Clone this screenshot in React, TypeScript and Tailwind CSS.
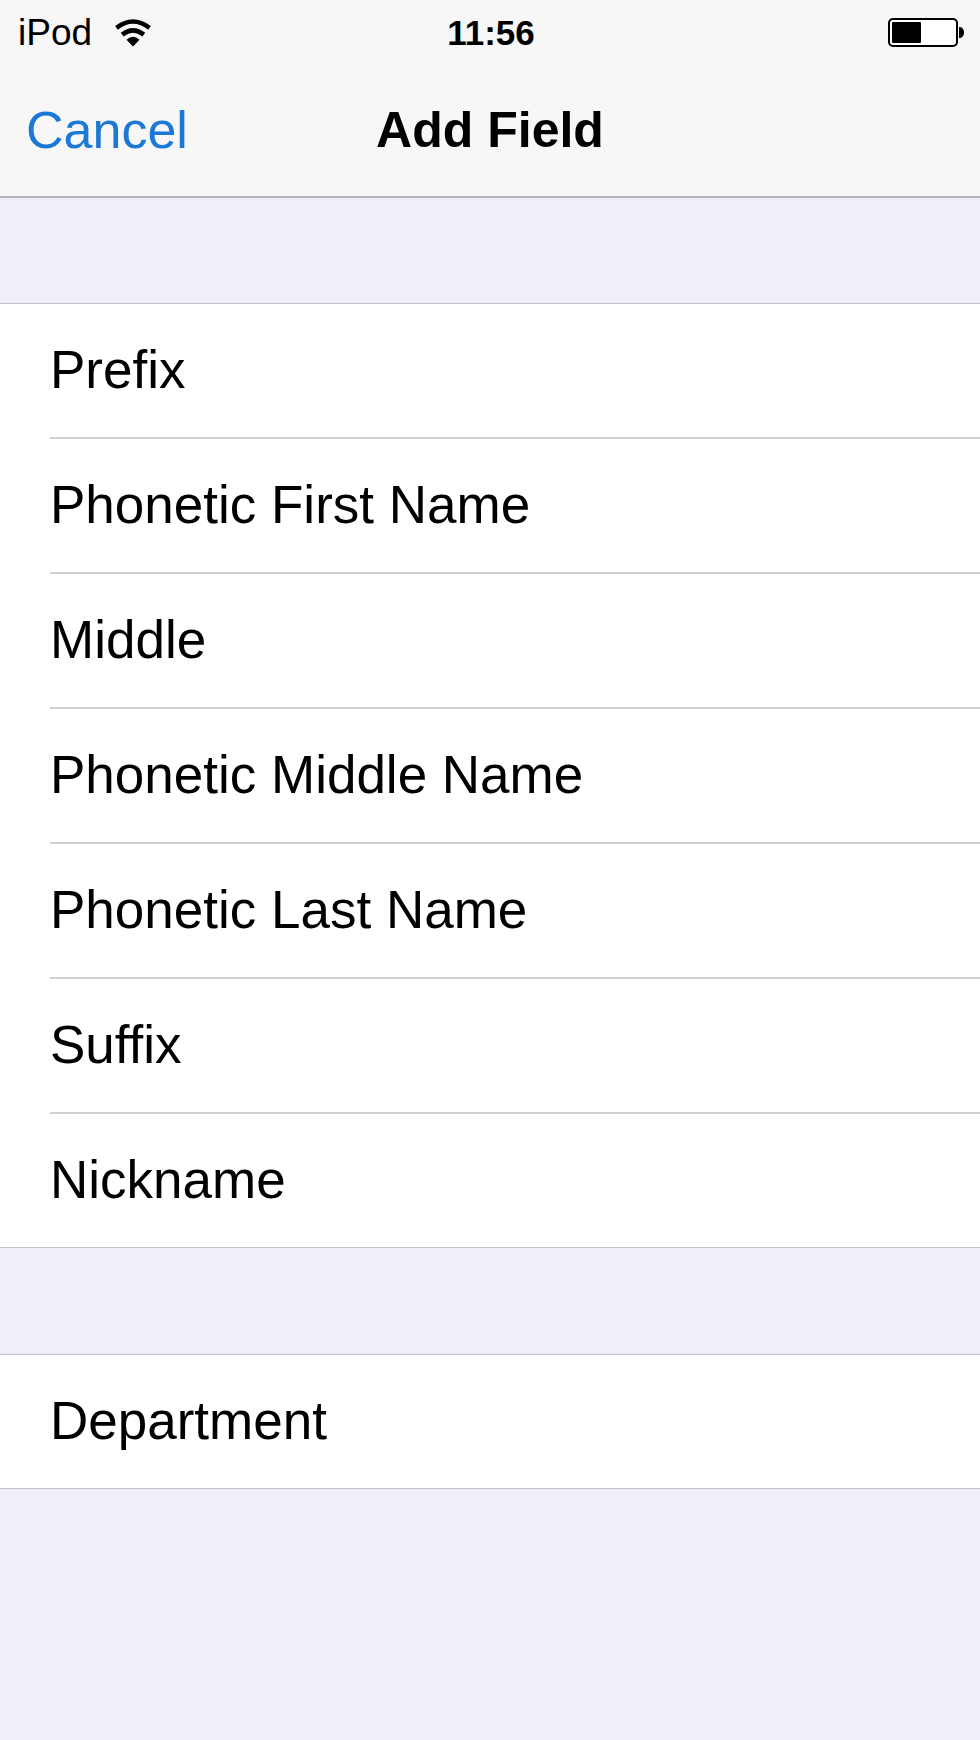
interface FieldListProps {
	fields: string[];
}

const nameFields = [
	'Prefix',
	'Phonetic First Name',
	'Middle',
	'Phonetic Middle Name',
	'Phonetic Last Name',
	'Suffix',
	'Nickname',
];
const workFields = ['Department'];

function WifiIcon() {
	return (
		<svg viewBox="0 0 38 28" className="h-7 w-[38px]" aria-hidden="true">
			<path d="M2.5 8.8Q19-3.8 35.5 8.8" fill="none" stroke="#000" strokeWidth="4.6" />
			<path d="M8.2 15.6Q19 7 29.8 15.6" fill="none" stroke="#000" strokeWidth="4.6" />
			<path d="M12.5 20.8Q19 14.6 25.5 20.8L19 27.5Z" />
		</svg>
	);
}

function BatteryIcon() {
	return (
		<svg viewBox="0 0 76 30" className="h-[30px] w-[76px]" role="img" aria-label="Battery">
			<rect x="1" y="1" width="68" height="27" rx="4" fill="#fff" stroke="#000" strokeWidth="2" />
			<rect x="4" y="4" width="29" height="21" rx="1" />
			<path d="M71 9c3 0 5 2 5 5.5s-2 5.5-5 5.5z" />
		</svg>
	);
}

function StatusBar() {
	return (
		<div className="grid h-16 grid-cols-3 items-center pt-0.5 pr-4 pl-[18px]">
			<div className="flex items-center gap-[22px] text-[37px]">
				<span>iPod</span>
				<WifiIcon />
			</div>
			<time className="text-center text-[35px] font-bold">11:56</time>
			<div className="flex justify-end">
				<BatteryIcon />
			</div>
		</div>
	);
}

function FieldList({ fields }: FieldListProps) {
	return (
		<ul className="border-y border-[#c3c2c7] bg-white pl-[50px]">
			{fields.map((field) => (
				<li key={field} className="border-b-2 border-[#d2d2d2] last:border-b-0">
					<button type="button" className="block h-[133px] w-full pb-0.5 text-left">
						{field}
					</button>
				</li>
			))}
		</ul>
	);
}

export default function App() {
	return (
		<div className="min-h-screen bg-[#f0eff9] font-['Liberation_Sans',Arial,sans-serif] text-[53px] text-black">
			<header className="border-b-2 border-[#b5b5b9] bg-[#f7f7f7]">
				<StatusBar />
				<nav className="grid h-[132px] grid-cols-[1fr_auto_1fr] items-center px-[26px]">
					<button type="button" className="justify-self-start text-[52px] text-[#1b78d6]">
						Cancel
					</button>
					<h1 className="text-[50px] font-bold">Add Field</h1>
				</nav>
			</header>
			<main className="flex flex-col gap-[106px] pt-[105px] pb-32">
				<FieldList fields={nameFields} />
				<FieldList fields={workFields} />
			</main>
		</div>
	);
}
